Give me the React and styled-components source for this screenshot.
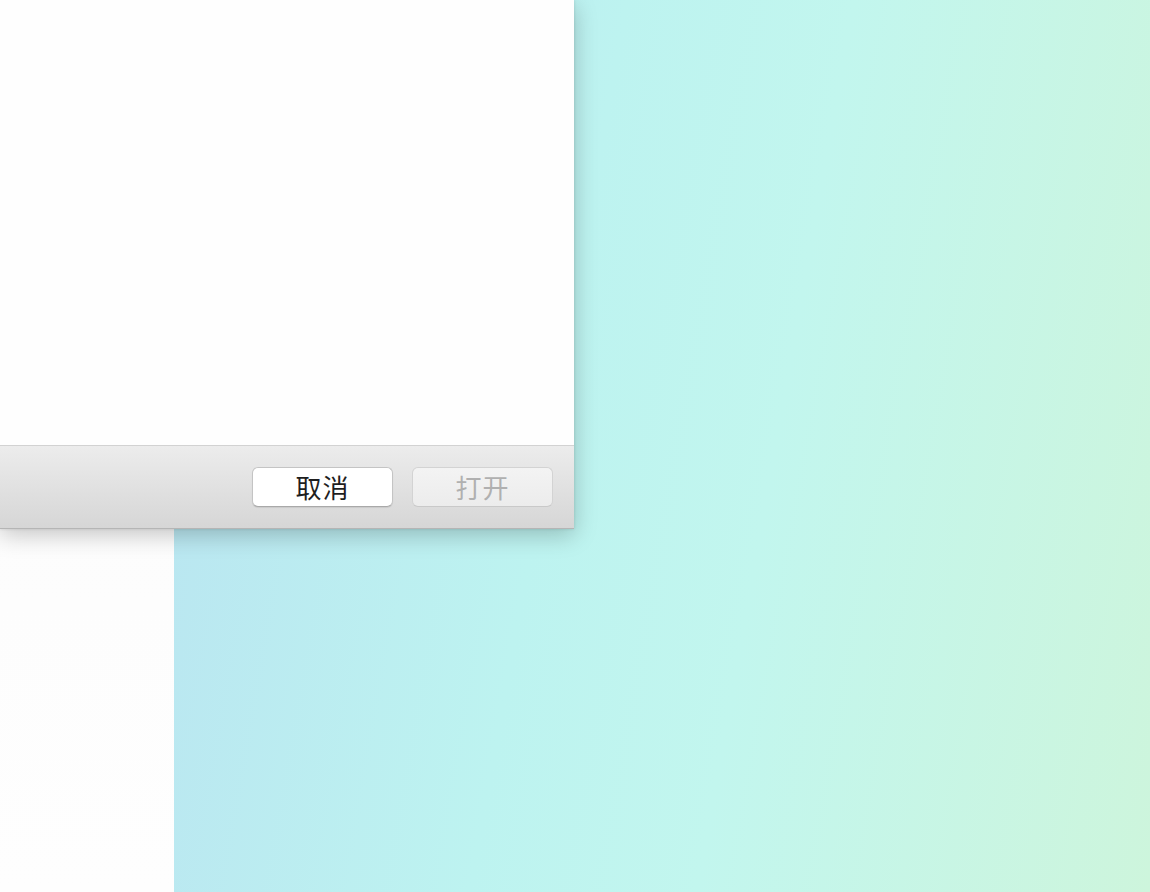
import React from 'react';
import styled, { createGlobalStyle } from 'styled-components';

const GlobalStyle = createGlobalStyle`
  html, body {
    margin: 0;
    padding: 0;
    height: 100%;
    overflow: hidden;
  }
  body {
    font-family: "Noto Sans CJK SC", "Noto Sans", sans-serif;
  }
`;

const Desktop = styled.div`
  position: relative;
  width: 1150px;
  height: 892px;
  display: grid;
  grid-template-columns: 174px 1fr;
`;

const Sidebar = styled.div`
  background: linear-gradient(180deg, #eeeeee 0px, #fbfbfb 30px, #fefefe 100%);
`;

const Wallpaper = styled.div`
  background: linear-gradient(100deg, #b9e4f1 0%, #bdf3f0 40%, #c2f6ee 60%, #cdf5dc 100%);
`;

const Window = styled.div`
  position: absolute;
  left: 0;
  top: 0;
  width: 574px;
  height: 529px;
  display: flex;
  flex-direction: column;
  background: #fff;
  box-shadow: 0 6px 22px rgba(0, 0, 0, 0.22), 0 0 3px rgba(0, 0, 0, 0.12);
`;

const Content = styled.div`
  flex: 1;
  background: #fefefe;
  border-bottom: 1px solid #d2d2d2;
`;

const Footer = styled.div`
  height: 83px;
  box-sizing: border-box;
  display: flex;
  align-items: center;
  justify-content: flex-end;
  gap: 19px;
  padding: 0 21px 0 0;
  background: linear-gradient(180deg, #ececec 0%, #d6d6d6 100%);
  border-bottom: 1px solid #b5b5b5;
`;

const Button = styled.button`
  width: 141px;
  height: 40px;
  box-sizing: border-box;
  border-radius: 6px;
  font-family: "Noto Sans CJK SC", sans-serif;
  font-size: 26px;
  line-height: 1;
  padding: 0 0 1px;
  letter-spacing: 1px;
  cursor: default;
  color: ${(p) => (p.disabled ? '#b0b0b0' : '#1e1e1e')};
  background: ${(p) => (p.disabled ? 'linear-gradient(180deg, #f3f3f3, #ececec)' : '#ffffff')};
  border: 1px solid ${(p) => (p.disabled ? '#d3d3d3' : '#c4c4c4')};
  border-bottom-color: ${(p) => (p.disabled ? '#c9c9c9' : '#a9a9a9')};
  box-shadow: ${(p) => (p.disabled ? 'none' : '0 1px 1px rgba(0, 0, 0, 0.08)')};
`;

const App = () => {
  return (
    <>
      <GlobalStyle />
      <Desktop>
        <Sidebar />
        <Wallpaper />
        <Window>
          <Content />
          <Footer>
            <Button>取消</Button>
            <Button disabled>打开</Button>
          </Footer>
        </Window>
      </Desktop>
    </>
  );
};

export default App;
